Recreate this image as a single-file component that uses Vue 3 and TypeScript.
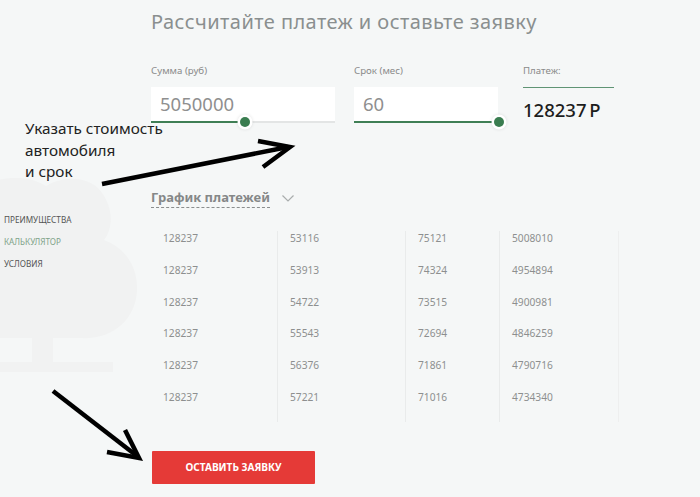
<script setup lang="ts">
const rows: string[][] = [
  ['128237', '53116', '75121', '5008010'],
  ['128237', '53913', '74324', '4954894'],
  ['128237', '54722', '73515', '4900981'],
  ['128237', '55543', '72694', '4846259'],
  ['128237', '56376', '71861', '4790716'],
  ['128237', '57221', '71016', '4734340'],
]
const columns = [0, 1, 2, 3].map((i) => rows.map((r) => r[i]))
</script>

<template>
  <div class="page">
    <svg class="tree" width="140" height="200" viewBox="0 0 140 200" aria-hidden="true">
      <path
        d="M-10 4 C10 -2 30 -2 46 8 C62 -2 92 -4 104 18 C114 34 112 52 104 62 C126 70 138 90 137 112 C136 142 112 162 80 160 L53 160 L53 184 L113 184 L113 194 L0 194 L0 184 L32 184 L32 160 L-10 160 Z"
        fill="#f1f2f2"
      />
    </svg>

    <aside class="nav">
      <a class="nav-item">ПРЕИМУЩЕСТВА</a>
      <a class="nav-item active">КАЛЬКУЛЯТОР</a>
      <a class="nav-item">УСЛОВИЯ</a>
    </aside>

    <main class="main">
      <h1 class="title">Рассчитайте платеж и оставьте заявку</h1>

      <section class="fields">
        <div class="field sum">
          <label class="label">Сумма (руб)</label>
          <div class="input">5050000</div>
          <div class="track">
            <div class="fill sum-fill"></div>
            <span class="knob"></span>
          </div>
        </div>
        <div class="field term">
          <label class="label">Срок (мес)</label>
          <div class="input">60</div>
          <div class="track">
            <div class="fill term-fill"></div>
            <span class="knob"></span>
          </div>
        </div>
        <div class="field pay">
          <label class="label">Платеж:</label>
          <div class="pay-value">128237 Р</div>
        </div>
      </section>

      <div class="schedule-head">
        <span class="schedule-title">График платежей</span>
        <svg class="chev" width="12" height="7" viewBox="0 0 12 7" aria-hidden="true">
          <path d="M0.5 0.5 L6 6 L11.5 0.5" fill="none" stroke="#a9adad" stroke-width="1.2" />
        </svg>
      </div>

      <div class="table">
        <div v-for="(col, i) in columns" :key="i" class="col" :class="'col-' + i">
          <div v-for="(v, j) in col" :key="j" class="cell">{{ v }}</div>
        </div>
      </div>

      <button class="submit" type="button">ОСТАВИТЬ ЗАЯВКУ</button>
    </main>

    <div class="note">Указать стоимость<br />автомобиля<br />и срок</div>

    <svg class="arrows" width="700" height="497" viewBox="0 0 700 497" aria-hidden="true">
      <g fill="none" stroke="#000" stroke-width="4.5">
        <path d="M102 184 L288 147" />
        <path d="M258 141 L290 147 L263 167" />
        <path d="M53 391 L137 456" />
        <path d="M125 430 L139 458 L107 452" />
      </g>
    </svg>
  </div>
</template>

<style>
html,
body {
  margin: 0;
  padding: 0;
}
</style>

<style scoped>
.page {
  position: relative;
  width: 700px;
  height: 497px;
  overflow: hidden;
  display: flex;
  background: #f5f7f7;
  font-family: "Noto Sans", "Open Sans", sans-serif;
}
.tree {
  position: absolute;
  left: 0;
  top: 178px;
}
.arrows {
  position: absolute;
  left: 0;
  top: 0;
  pointer-events: none;
}
.note {
  position: absolute;
  left: 25px;
  top: 118px;
  font-size: 15.3px;
  line-height: 21.5px;
  color: #222;
}
.nav {
  position: relative;
  width: 151px;
  flex: none;
  box-sizing: border-box;
  padding: 213px 0 0 4px;
  display: flex;
  flex-direction: column;
  gap: 8px;
}
.nav-item {
  font-size: 8.2px;
  line-height: 14px;
  color: #555;
}
.nav-item.active {
  color: #7fa389;
}
.main {
  position: relative;
  flex: 1;
  display: flex;
  flex-direction: column;
  align-items: flex-start;
}
.title {
  margin: 8px 0 0;
  font-size: 20px;
  line-height: 28px;
  font-weight: 400;
  letter-spacing: 0.44px;
  color: #8a8f8f;
  white-space: nowrap;
}
.fields {
  display: flex;
  margin-top: 28px;
}
.field {
  display: flex;
  flex-direction: column;
}
.sum {
  width: 184px;
  margin-right: 19px;
}
.term {
  width: 144px;
  margin-right: 25px;
}
.pay {
  width: 91px;
}
.label {
  font-size: 9.7px;
  line-height: 14px;
  height: 23px;
  color: #8a8a8a;
}
.input {
  height: 34px;
  box-sizing: border-box;
  padding-left: 9px;
  background: #fff;
  font-size: 18.5px;
  line-height: 33px;
  color: #8f8f8f;
}
.track {
  position: relative;
  height: 2px;
  background: #e3e5e5;
}
.fill {
  height: 2px;
  background: #3f7f55;
}
.sum-fill {
  width: 94px;
}
.term-fill {
  width: 100%;
}
.knob {
  position: absolute;
  top: -4px;
  width: 10px;
  height: 10px;
  border-radius: 50%;
  background: #3a7d50;
  box-shadow: 0 0 0 2.5px #fff, 0 0 3px 3px rgba(0, 0, 0, 0.08);
}
.sum .knob {
  left: 89px;
}
.term .knob {
  right: -6px;
}
.pay-value {
  border-top: 1px solid #5f9474;
  padding-top: 10px;
  font-size: 18.5px;
  line-height: 24px;
  font-weight: 500;
  color: #1d1d1d;
  word-spacing: -2px;
}
.schedule-head {
  display: flex;
  align-items: center;
  gap: 12px;
  margin-top: 66px;
}
.schedule-title {
  font-size: 13px;
  line-height: 17px;
  padding-bottom: 1px;
  font-weight: 700;
  color: #858888;
  border-bottom: 1px dashed #8a8d8d;
}
.table {
  display: flex;
  margin-top: 23px;
  border-right: 1px solid #eeefef;
}
.col {
  box-sizing: border-box;
  padding: 0 0 0 12px;
}
.col + .col {
  border-left: 1px solid #e9ebeb;
}
.col-0 {
  width: 126px;
}
.col-1 {
  width: 128px;
}
.col-2 {
  width: 94px;
}
.col-3 {
  width: 119px;
}
.cell {
  height: 31.8px;
  font-size: 10.2px;
  line-height: 14px;
  color: #8d8f8f;
}
.submit {
  margin: 29px 0 0 1px;
  width: 163px;
  height: 33px;
  padding: 0;
  border: 0;
  border-radius: 1px;
  background: #e53a37;
  color: #fff;
  font-family: inherit;
  font-size: 10.1px;
  font-weight: 700;
}
</style>
